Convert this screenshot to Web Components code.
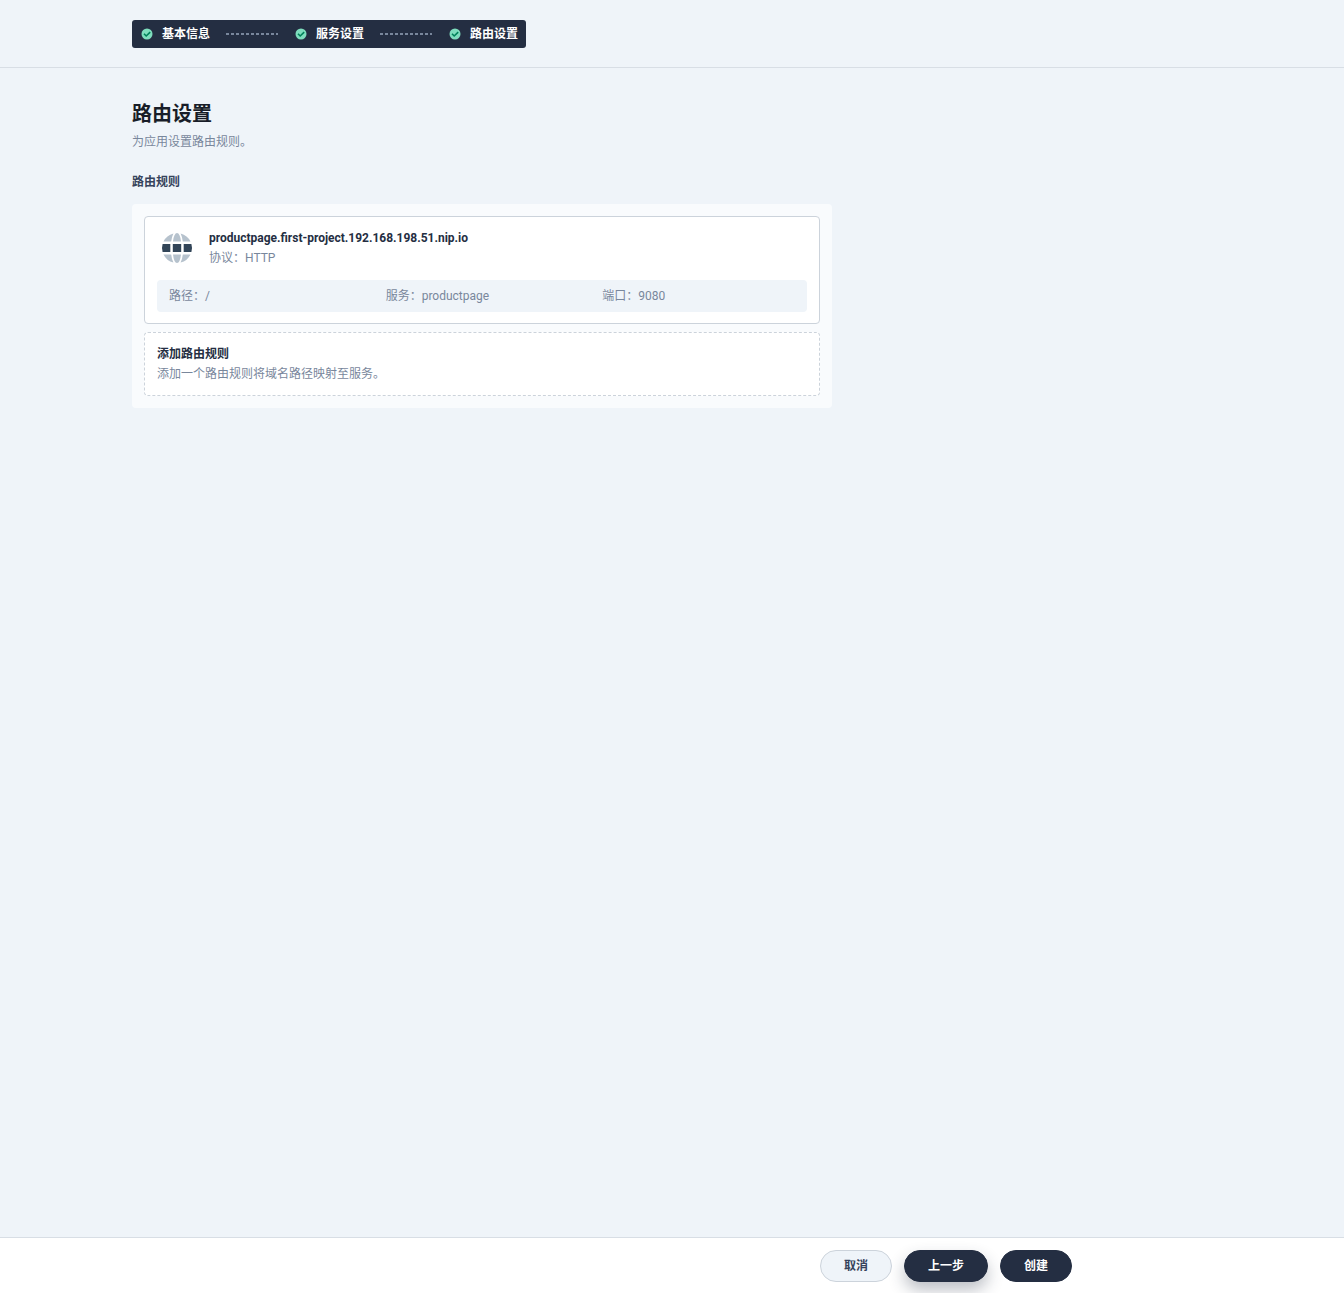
<!DOCTYPE html>
<html lang="zh">
<head>
<meta charset="utf-8">
<title>路由设置</title>
<style>
  html, body {
    height: 100%;
  }

  body {
    margin: 0;
    background: #eff4f9;
    color: #79879c;
    font-family: Roboto, "Noto Sans CJK SC", sans-serif;
    font-size: 12px;
    line-height: 20px;
  }
</style>
</head>
<body>
  <create-page>
    <step-bar slot="header">
      <step-item>基本信息</step-item>
      <step-item>服务设置</step-item>
      <step-item>路由设置</step-item>
    </step-bar>

    <form-section heading="路由设置" description="为应用设置路由规则。" label="路由规则">
      <route-rule host="productpage.first-project.192.168.198.51.nip.io" protocol="HTTP">
        <span>路径：/</span>
        <span>服务：productpage</span>
        <span>端口：9080</span>
      </route-rule>
      <add-rule heading="添加路由规则">添加一个路由规则将域名路径映射至服务。</add-rule>
    </form-section>

    <pill-button slot="footer" variant="default">取消</pill-button>
    <pill-button slot="footer" variant="control" raised>上一步</pill-button>
    <pill-button slot="footer" variant="control">创建</pill-button>
  </create-page>

<script>
  class CreatePage extends HTMLElement {
    constructor() {
      super();
      this.attachShadow({ mode: "open" }).innerHTML = `
        <style>
          :host {
            display: flex;
            flex-direction: column;
            min-height: 100vh;
          }

          .container {
            box-sizing: border-box;
            width: 100%;
            max-width: 1080px;
            margin: 0 auto;
          }

          header {
            padding: 20px 0 19px;
            border-bottom: 1px solid #d8dee5;
          }

          main {
            flex: 1;
            padding: 32px 0;
          }

          footer {
            background: #fff;
            border-top: 1px solid #d8dee5;
            padding: 12px 0 11px;
            overflow: hidden;
          }

          footer .container {
            display: flex;
            justify-content: flex-end;
            gap: 12px;
            padding-right: 140px;
          }
        </style>
        <header><div class="container"><slot name="header"></slot></div></header>
        <main><div class="container"><slot></slot></div></main>
        <footer><div class="container"><slot name="footer"></slot></div></footer>
      `;
    }
  }

  class StepBar extends HTMLElement {
    constructor() {
      super();
      this.attachShadow({ mode: "open" }).innerHTML = `
        <style>
          :host {
            display: flex;
            width: fit-content;
            padding: 4px 8px;
            border-radius: 3px;
            background: #242e42;
            color: #fff;
          }
        </style>
        <slot></slot>
      `;
    }
  }

  class StepItem extends HTMLElement {
    constructor() {
      super();
      this.attachShadow({ mode: "open" }).innerHTML = `
        <style>
          :host {
            display: flex;
            align-items: center;
            font-weight: 600;
          }

          svg {
            display: block;
            width: 14px;
            height: 14px;
            margin-right: 8px;
          }

          .line {
            width: 52px;
            height: 2px;
            margin: 0 16px;
            background: repeating-linear-gradient(90deg, #79879c 0 3px, transparent 3px 5px);
          }

          :host(:last-child) .line {
            display: none;
          }
        </style>
        <svg viewBox="0 0 14 14">
          <circle cx="7" cy="7" r="5.5" fill="#7eddbd"/>
          <path d="M4 6.8l2.2 2.2 4-3.9" fill="none" stroke="#00825a" stroke-width="1.6"/>
        </svg>
        <slot></slot>
        <div class="line"></div>
      `;
    }
  }

  class FormSection extends HTMLElement {
    connectedCallback() {
      this.attachShadow({ mode: "open" }).innerHTML = `
        <style>
          :host {
            display: block;
            max-width: 700px;
          }

          h1 {
            margin: 0;
            color: #181d28;
            font-size: 20px;
            font-weight: 600;
            line-height: 28px;
          }

          p {
            margin: 4px 0 20px;
          }

          h2 {
            margin: 0 0 12px;
            color: #36435c;
            font-size: 12px;
            font-weight: 600;
          }

          .list {
            display: flex;
            flex-direction: column;
            gap: 8px;
            padding: 12px;
            border-radius: 4px;
            background: #f9fbfd;
          }
        </style>
        <h1>${this.getAttribute("heading")}</h1>
        <p>${this.getAttribute("description")}</p>
        <h2>${this.getAttribute("label")}</h2>
        <div class="list"><slot></slot></div>
      `;
    }
  }

  class RouteRule extends HTMLElement {
    connectedCallback() {
      this.attachShadow({ mode: "open" }).innerHTML = `
        <style>
          :host {
            display: block;
            padding: 11px 12px;
            border: 1px solid #ccd3db;
            border-radius: 4px;
            background: #fff;
          }

          .title {
            display: flex;
            align-items: center;
            gap: 12px;
            margin-bottom: 12px;
          }

          svg {
            width: 40px;
            height: 40px;
          }

          strong {
            display: block;
            color: #242e42;
            font-weight: 700;
          }

          .paths {
            display: grid;
            grid-template-columns: repeat(3, 1fr);
            border-radius: 4px;
            background: #eff4f9;
          }

          ::slotted(span) {
            padding: 6px 12px;
          }
        </style>
        <div class="title">
          <svg viewBox="0 0 40 40">
            <g fill="#b6c2cd">
              <path d="M14.2 13.5H6.5A15 15 0 0 1 16.4 5.4Q14.7 8.8 14.2 13.5Z"/>
              <path d="M25.8 13.5H33.5A15 15 0 0 0 23.6 5.4Q25.3 8.8 25.8 13.5Z"/>
              <path d="M16 13.5Q17 5 20 5T24 13.5Z"/>
              <path d="M14.2 26.5H6.5A15 15 0 0 0 16.4 34.6Q14.7 31.2 14.2 26.5Z"/>
              <path d="M25.8 26.5H33.5A15 15 0 0 1 23.6 34.6Q25.3 31.2 25.8 26.5Z"/>
              <path d="M16 26.5Q17 35 20 35T24 26.5Z"/>
            </g>
            <g fill="#324558">
              <path d="M5.6 16H13.3V24H5.6Q4.4 20 5.6 16Z"/>
              <rect x="15.8" y="16" width="8.4" height="8"/>
              <path d="M26.7 16H34.4Q35.6 20 34.4 24H26.7Z"/>
            </g>
          </svg>
          <div>
            <strong>${this.getAttribute("host")}</strong>
            协议：${this.getAttribute("protocol")}
          </div>
        </div>
        <div class="paths"><slot></slot></div>
      `;
    }
  }

  class AddRule extends HTMLElement {
    connectedCallback() {
      this.attachShadow({ mode: "open" }).innerHTML = `
        <style>
          :host {
            display: block;
          }

          button {
            display: block;
            width: 100%;
            padding: 11px 12px;
            border: 1px dashed #ccd3db;
            border-radius: 4px;
            background: #fff;
            color: inherit;
            font: inherit;
            text-align: left;
            cursor: pointer;
          }

          strong {
            display: block;
            color: #242e42;
            font-weight: 600;
          }
        </style>
        <button type="button">
          <strong>${this.getAttribute("heading")}</strong>
          <slot></slot>
        </button>
      `;
    }
  }

  class PillButton extends HTMLElement {
    constructor() {
      super();
      this.attachShadow({ mode: "open" }).innerHTML = `
        <style>
          :host {
            display: block;
          }

          button {
            display: block;
            padding: 5px 23px;
            border: 1px solid #ccd3db;
            border-radius: 16px;
            background: #eff4f9;
            color: #36435c;
            font: inherit;
            font-weight: 600;
            cursor: pointer;
          }

          :host([variant="control"]) button {
            border-color: #242e42;
            background: #242e42;
            color: #fff;
          }

          :host([raised]) button {
            box-shadow: 0 8px 16px rgba(36, 46, 66, 0.3);
          }
        </style>
        <button type="button"><slot></slot></button>
      `;
    }
  }

  customElements.define("create-page", CreatePage);
  customElements.define("step-bar", StepBar);
  customElements.define("step-item", StepItem);
  customElements.define("form-section", FormSection);
  customElements.define("route-rule", RouteRule);
  customElements.define("add-rule", AddRule);
  customElements.define("pill-button", PillButton);
</script>
</body>
</html>
